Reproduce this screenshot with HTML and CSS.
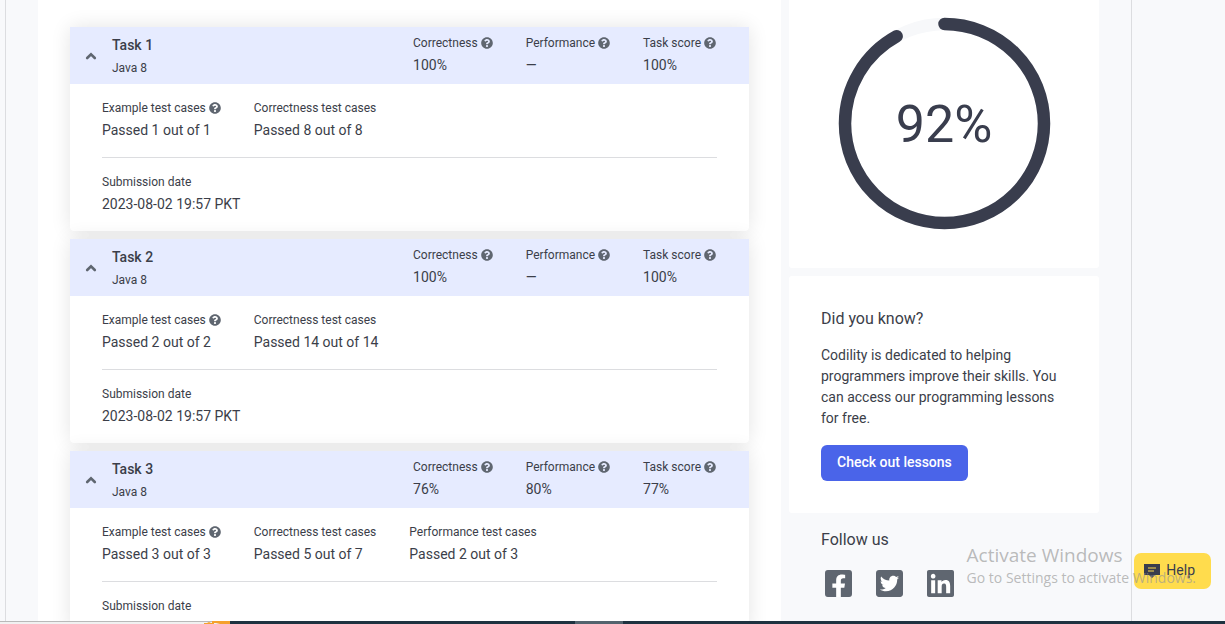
FILE: index.html
```html
<!DOCTYPE html>
<html lang="en">
<head>
<meta charset="utf-8">
<title>Test results</title>
<link rel="stylesheet" href="styles.css">
</head>
<body>
<svg class="sprite" aria-hidden="true">
  <symbol id="question" viewBox="0 0 512 512"><path d="M504 256c0 136.997-111.043 248-248 248S8 392.997 8 256C8 119.083 119.043 8 256 8s248 111.083 248 248zM262.655 90c-54.497 0-89.255 22.957-116.549 63.758-3.536 5.286-2.353 12.415 2.715 16.258l34.699 26.31c5.205 3.947 12.621 3.008 16.665-2.122 17.864-22.658 30.113-35.797 57.303-35.797 20.429 0 45.698 13.148 45.698 32.958 0 14.976-12.363 22.667-32.534 33.976C247.128 238.528 216 254.941 216 296v4c0 6.627 5.373 12 12 12h56c6.627 0 12-5.373 12-12v-1.333c0-28.462 83.186-29.647 83.186-106.667 0-58.002-60.165-102-116.531-102zM256 338c-25.365 0-46 20.635-46 46 0 25.364 20.635 46 46 46s46-20.636 46-46c0-25.364-20.635-46-46-46z"/></symbol>
  <symbol id="chevron" viewBox="0 0 12 12"><path d="M2.200 8 6 4.400l3.800 3.600" fill="none" stroke="currentColor" stroke-width="2.600" stroke-linecap="round"/></symbol>
</svg>
<div class="viewport">
  <div class="frame">
    <main class="tasks">
      <section class="task">
        <header class="task-header">
          <button class="toggle" aria-label="Collapse Task 1"><svg><use href="#chevron"/></svg></button>
          <div class="task-title"><h2>Task 1</h2><span>Java 8</span></div>
          <dl class="facts">
            <div><dt>Correctness <svg class="hint"><use href="#question"/></svg></dt><dd>100%</dd></div>
            <div><dt>Performance <svg class="hint"><use href="#question"/></svg></dt><dd>—</dd></div>
            <div><dt>Task score <svg class="hint"><use href="#question"/></svg></dt><dd>100%</dd></div>
          </dl>
        </header>
        <div class="task-body">
          <dl class="facts">
            <div><dt>Example test cases <svg class="hint"><use href="#question"/></svg></dt><dd>Passed 1 out of 1</dd></div>
            <div><dt>Correctness test cases</dt><dd>Passed 8 out of 8</dd></div>
          </dl>
          <dl class="facts submission">
            <div><dt>Submission date</dt><dd>2023-08-02 19:57 PKT</dd></div>
          </dl>
        </div>
      </section>
      <section class="task">
        <header class="task-header">
          <button class="toggle" aria-label="Collapse Task 2"><svg><use href="#chevron"/></svg></button>
          <div class="task-title"><h2>Task 2</h2><span>Java 8</span></div>
          <dl class="facts">
            <div><dt>Correctness <svg class="hint"><use href="#question"/></svg></dt><dd>100%</dd></div>
            <div><dt>Performance <svg class="hint"><use href="#question"/></svg></dt><dd>—</dd></div>
            <div><dt>Task score <svg class="hint"><use href="#question"/></svg></dt><dd>100%</dd></div>
          </dl>
        </header>
        <div class="task-body">
          <dl class="facts">
            <div><dt>Example test cases <svg class="hint"><use href="#question"/></svg></dt><dd>Passed 2 out of 2</dd></div>
            <div><dt>Correctness test cases</dt><dd>Passed 14 out of 14</dd></div>
          </dl>
          <dl class="facts submission">
            <div><dt>Submission date</dt><dd>2023-08-02 19:57 PKT</dd></div>
          </dl>
        </div>
      </section>
      <section class="task">
        <header class="task-header">
          <button class="toggle" aria-label="Collapse Task 3"><svg><use href="#chevron"/></svg></button>
          <div class="task-title"><h2>Task 3</h2><span>Java 8</span></div>
          <dl class="facts">
            <div><dt>Correctness <svg class="hint"><use href="#question"/></svg></dt><dd>76%</dd></div>
            <div><dt>Performance <svg class="hint"><use href="#question"/></svg></dt><dd>80%</dd></div>
            <div><dt>Task score <svg class="hint"><use href="#question"/></svg></dt><dd>77%</dd></div>
          </dl>
        </header>
        <div class="task-body">
          <dl class="facts">
            <div><dt>Example test cases <svg class="hint"><use href="#question"/></svg></dt><dd>Passed 3 out of 3</dd></div>
            <div><dt>Correctness test cases</dt><dd>Passed 5 out of 7</dd></div>
            <div><dt>Performance test cases</dt><dd>Passed 2 out of 3</dd></div>
          </dl>
          <dl class="facts submission">
            <div><dt>Submission date</dt></div>
          </dl>
        </div>
      </section>
    </main>
    <aside class="sidebar">
      <section class="score">
        <svg class="ring" viewBox="0 0 212 212" role="img" aria-label="Total score 92%">
          <circle cx="106.500" cy="105.500" r="99.5" fill="none" stroke="#f7f8fa" stroke-width="12.5"/>
          <circle cx="106.500" cy="105.500" r="99.5" fill="none" stroke="#393d4d" stroke-width="12.5" stroke-linecap="round" pathLength="100" stroke-dasharray="92 100" transform="rotate(-90 106.500 105.500)"/>
          <text class="ring-value" x="106" y="124" text-anchor="middle">92%</text>
        </svg>
      </section>
      <section class="tip">
        <h3>Did you know?</h3>
        <p>Codility is dedicated to helping programmers improve their skills. You can access our programming lessons for free.</p>
        <a class="lessons" href="#lessons">Check out lessons</a>
      </section>
      <section class="follow">
        <h3>Follow us</h3>
        <nav class="social">
          <a href="#facebook" aria-label="Facebook"><svg viewBox="0 32 448 448"><rect class="mark" x="100" y="80" width="260" height="400"/><path d="M400 32H48A48 48 0 0 0 0 80v352a48 48 0 0 0 48 48h137.25V327.69h-63V256h63v-54.64c0-62.15 37-96.48 93.67-96.48 27.14 0 55.52 4.84 55.52 4.84v61h-31.27c-30.81 0-40.42 19.12-40.42 38.73V256h68.78l-11 71.69h-57.78V480H400a48 48 0 0 0 48-48V80a48 48 0 0 0-48-48z"/></svg></a>
          <a href="#twitter" aria-label="Twitter"><svg viewBox="0 32 448 448"><rect class="mark" x="50" y="100" width="350" height="300"/><path d="M400 32H48C21.5 32 0 53.5 0 80v352c0 26.5 21.5 48 48 48h352c26.5 0 48-21.5 48-48V80c0-26.5-21.5-48-48-48zm-48.9 158.8c.2 2.8.2 5.7.2 8.5 0 86.7-66 186.6-186.6 186.6-37.2 0-71.7-10.8-100.7-29.4 5.3.6 10.4.8 15.8.8 30.7 0 58.9-10.4 81.4-28-28.8-.6-53-19.5-61.3-45.5 10.1 1.5 19.2 1.5 29.6-1.2-30-6.1-52.5-32.5-52.5-64.4v-.8c8.7 4.9 18.9 7.9 29.6 8.3a65.447 65.447 0 0 1-29.2-54.6c0-12.2 3.2-23.4 8.9-33.1 32.3 39.8 80.8 65.8 135.2 68.6-9.3-44.5 24-80.6 64-80.6 18.9 0 35.9 7.9 47.9 20.7 14.8-2.8 29-8.3 41.6-15.8-4.9 15.2-15.2 28-28.8 36.1 13.2-1.4 26-5.1 37.8-10.2-8.9 13.1-20.1 24.7-32.9 34z"/></svg></a>
          <a href="#linkedin" aria-label="LinkedIn"><svg viewBox="0 32 448 448"><rect class="mark" x="50" y="80" width="350" height="350"/><path d="M416 32H31.9C14.3 32 0 46.5 0 64.3v383.4C0 465.5 14.3 480 31.9 480H416c17.6 0 32-14.5 32-32.3V64.3c0-17.8-14.4-32.3-32-32.3zM135.4 416H69V202.2h66.5V416zm-33.2-243c-21.3 0-38.5-17.3-38.5-38.5S80.9 96 102.2 96c21.2 0 38.5 17.3 38.5 38.5 0 21.3-17.2 38.5-38.5 38.5zm282.1 243h-66.4V312c0-24.8-.5-56.7-34.5-56.7-34.6 0-39.9 27-39.9 54.9V416h-66.4V202.2h63.7v29.2h.9c8.9-16.8 30.6-34.5 62.9-34.5 67.2 0 79.7 44.3 79.7 101.9V416z"/></svg></a>
        </nav>
      </section>
    </aside>
  </div>
</div>
<footer class="taskbar">
  <div class="search"><svg viewBox="0 0 26 3"><path d="M0 2h3l2-1 2 1h3v1H0zM8 0h18v3H16l-4-1-4 0z" fill="#f5a12d"/></svg></div>
  <div class="app"></div>
</footer>
<button class="help"><svg viewBox="0 0 16 16"><path d="M0 2h16v11h-5l-3 3-3-3H0z" fill="#393d4d"/><path d="M4 6h8M4 9h6" stroke="#ffdc4d" stroke-width="1.200"/></svg>Help</button>
<div class="watermark"><strong>Activate Windows</strong><span>Go to Settings to activate Windows.</span></div>
</body>
</html>
```
FILE: styles.css
```css
* { box-sizing: border-box; }
body {
  margin: 0;
  height: 100vh;
  display: flex;
  flex-direction: column;
  overflow: hidden;
  background: #f8f9fb;
  color: #3b3e49;
  font: 14px/21px Roboto, sans-serif;
}
h2, h3, p, dl, dd { margin: 0; }
.sprite { position: absolute; width: 0; height: 0; }

.viewport { flex: 1; min-height: 0; overflow: hidden; padding: 0 93px 0 5px; }
.frame {
  display: flex;
  gap: 8px;
  min-height: 100%;
  padding: 0 32px;
  border: solid #dcdde0;
  border-width: 0 1px;
}
.tasks {
  flex: 1;
  display: flex;
  flex-direction: column;
  gap: 8px;
  padding: 27px 32px;
  background: #fff;
}
.task {
  background: #fff;
  border-radius: 4px;
  box-shadow: 0 0 20px rgba(0, 0, 0, .11);
}
.task-header {
  display: flex;
  padding: 7px 33px 7px 15px;
  background: #e6ebff;
}
.toggle {
  align-self: center;
  display: flex;
  padding: 0;
  border: 0;
  background: none;
  color: #5f6670;
}
.toggle svg { width: 12px; height: 12px; }
.task-title { flex: 1; margin-left: 15px; padding-top: 1px; }
.task-title h2 { font-size: 14px; line-height: 21px; font-weight: 500; }
.task-title span { display: block; margin-top: 3px; font-size: 12px; line-height: 18px; }
.facts { display: flex; gap: 33px; }
.facts dt { display: flex; align-items: center; gap: 3px; font-size: 12px; line-height: 18px; }
.facts dd { margin-top: 3px; }
.hint { width: 12px; height: 12px; fill: #5f6670; }
.task-body { padding: 15px 32px 16px; }
.submission { margin-top: 16px; padding-top: 15px; border-top: 1px solid #dcdde0; }

.sidebar { width: 310px; flex: none; display: flex; flex-direction: column; gap: 8px; }
.score { padding: 18px 0 38px; background: #fff; border-radius: 0 0 3px 3px; text-align: center; }
.ring { display: block; width: 212px; height: 212px; margin: 0 auto; overflow: visible; }
.ring-value { font-size: 52px; fill: #393d4d; }
.tip { padding: 32px; background: #fff; border-radius: 3px; }
.sidebar h3 { font-size: 16px; line-height: 21px; font-weight: 400; }
.tip p { margin: 16px 0; }
.lessons {
  display: inline-block;
  padding: 7px 16px 8px;
  border-radius: 6px;
  background: #4a64e9;
  color: #fff;
  font-weight: 500;
  text-decoration: none;
  vertical-align: top;
}
.follow { padding: 8px 32px; }
.social { display: flex; gap: 24px; padding: 20px 4px; }
.social svg { display: block; width: 27px; height: 27px; fill: #5f6670; }
.social .mark { fill: #fff; }

.taskbar { flex: none; display: flex; height: 3px; background: #1e3240; }
.search { display: flex; justify-content: flex-end; width: 230px; background: #f1f1f1; border-top: 1px solid #b9b9b9; }
.search svg { width: 26px; height: 3px; margin-top: -1px; }
.app { width: 48px; margin-left: 345px; background: #53636e; }

.help {
  position: absolute;
  right: 14px;
  bottom: 35px;
  display: flex;
  align-items: center;
  gap: 6px;
  height: 36px;
  padding: 0 16px 2px 10px;
  border: 0;
  border-radius: 7px;
  background: #ffdc4d;
  color: #393d4d;
  font: 14px/21px Roboto, sans-serif;
}
.help svg { width: 16px; height: 16px; }
.watermark {
  position: absolute;
  right: 29px;
  bottom: 36px;
  display: flex;
  flex-direction: column;
  color: rgba(150, 150, 150, .65);
  font-family: "Open Sans", sans-serif;
  pointer-events: none;
}
.watermark strong { font-size: 19px; line-height: 24px; font-weight: 400; }
.watermark span { font-size: 14px; line-height: 21px; }
```
